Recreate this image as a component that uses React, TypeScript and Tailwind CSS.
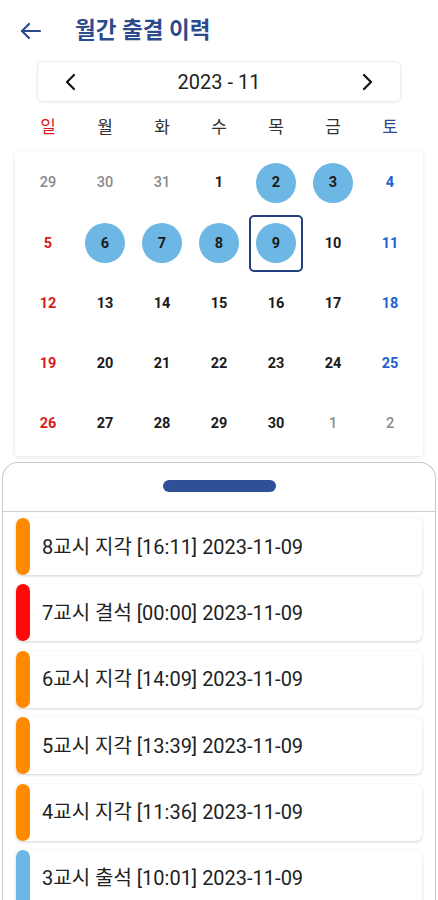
import React from "react";

const FONT = { fontFamily: 'Roboto, "Noto Sans CJK KR", sans-serif' };

const weeks: number[][] = [
  [29, 30, 31, 1, 2, 3, 4],
  [5, 6, 7, 8, 9, 10, 11],
  [12, 13, 14, 15, 16, 17, 18],
  [19, 20, 21, 22, 23, 24, 25],
  [26, 27, 28, 29, 30, 1, 2],
];

const marked = [2, 3, 6, 7, 8, 9];

const records = [
  { text: "8교시 지각 [16:11] 2023-11-09", color: "bg-[#ff8a00]" },
  { text: "7교시 결석 [00:00] 2023-11-09", color: "bg-[#ff0a0a]" },
  { text: "6교시 지각 [14:09] 2023-11-09", color: "bg-[#ff8a00]" },
  { text: "5교시 지각 [13:39] 2023-11-09", color: "bg-[#ff8a00]" },
  { text: "4교시 지각 [11:36] 2023-11-09", color: "bg-[#ff8a00]" },
  { text: "3교시 출석 [10:01] 2023-11-09", color: "bg-[#6cb7e3]" },
];

function DayCell({ d, w, i }: { d: number; w: number; i: number }) {
  const outside = (w === 0 && d > 20) || (w === 4 && d < 10);
  const isMarked = !outside && marked.includes(d);
  const selected = !outside && d === 9;
  let color = "text-[#1a1a1a]";
  if (outside) color = "text-[#8a8a8a] font-medium";
  else if (i === 0) color = "text-[#d81b1b]";
  else if (i === 6) color = "text-[#1f5fd1]";
  return (
    <div className="flex h-[60.3px] items-center justify-center">
      <div
        className={`flex h-[57px] w-[54px] items-center justify-center rounded-[5px] ${
          selected ? "border-2 border-[#23407f]" : ""
        }`}
      >
        <div
          className={`flex h-[40px] w-[40px] items-center justify-center rounded-full text-[14.5px] ${
            outside ? "" : "font-bold"
          } ${color} ${isMarked ? "bg-[#6cb7e3]" : ""}`}
        >
          {d}
        </div>
      </div>
    </div>
  );
}

export default function App() {
  return (
    <div className="relative h-[900px] w-[438px] overflow-hidden bg-white" style={FONT}>
      {/* header */}
      <div className="flex h-[61px] items-center pl-[19px]">
        <svg width="24" height="24" viewBox="0 0 24 24" fill="none" stroke="#2b4b8c" strokeWidth="2.2" strokeLinecap="round" strokeLinejoin="round">
          <path d="M21 12H3" />
          <path d="M10 5l-7 7 7 7" />
        </svg>
        <div className="ml-[32px] text-[22.5px] font-bold text-[#2b4b8c]">월간 출결 이력</div>
      </div>

      {/* month selector */}
      <div className="mx-[37px] flex h-[41px] items-center justify-between rounded-[6px] border border-[#ececec] bg-white px-[25px] shadow-[0_1px_3px_rgba(0,0,0,0.06)]">
        <svg width="16" height="18" viewBox="0 0 16 18" fill="none" stroke="#111" strokeWidth="2.2" strokeLinecap="round" strokeLinejoin="round">
          <path d="M11 2L4 9l7 7" />
        </svg>
        <div className="text-[20px] text-[#222]">2023 - 11</div>
        <svg width="16" height="18" viewBox="0 0 16 18" fill="none" stroke="#111" strokeWidth="2.2" strokeLinecap="round" strokeLinejoin="round">
          <path d="M5 2l7 7-7 7" />
        </svg>
      </div>

      {/* weekday header */}
      <div className="mx-[19.5px] mt-[3px] grid h-[46px] grid-cols-7 items-center text-[17px] text-[#333]">
        <div className="text-center text-[#d81b1b]">일</div>
        <div className="text-center">월</div>
        <div className="text-center">화</div>
        <div className="text-center">수</div>
        <div className="text-center">목</div>
        <div className="text-center">금</div>
        <div className="text-center text-[#2b4b8c]">토</div>
      </div>

      {/* calendar card */}
      <div className="mx-[15px] rounded-[4px] bg-white pb-[2px] pt-[2px] shadow-[0_1px_4px_rgba(0,0,0,0.12)]">
        <div className="mx-[4.5px] grid grid-cols-7">
          {weeks.map((wk, w) =>
            wk.map((d, i) => <DayCell key={`${w}-${i}`} d={d} w={w} i={i} />)
          )}
        </div>
      </div>

      {/* bottom sheet */}
      <div className="absolute left-[2px] right-[2px] top-[462px] bottom-0 rounded-t-[16px] border-[1.5px] border-b-0 border-[#c8c8c8] bg-white">
        <div className="flex h-[48px] justify-center pt-[17px]">
          <div className="h-[12px] w-[113px] rounded-full bg-[#2d5096]" />
        </div>
        <div className="h-px bg-[#cfcfcf]" />
        <div className="flex flex-col gap-[9.4px] px-[13px] pt-[6px]">
          {records.map((r) => (
            <div
              key={r.text}
              className="flex h-[57px] items-center rounded-[6px] bg-white shadow-[0_1px_3px_rgba(0,0,0,0.18)]"
            >
              <div className={`h-full w-[14px] shrink-0 rounded-[7px] ${r.color}`} />
              <div className="ml-[12px] text-[20px] text-[#222]">{r.text}</div>
            </div>
          ))}
        </div>
      </div>
    </div>
  );
}
